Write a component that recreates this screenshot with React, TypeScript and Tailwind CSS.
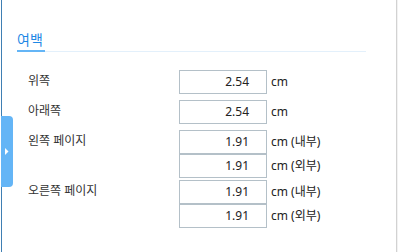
import React from "react";

const font = "font-['Noto_Sans','Noto_Sans_CJK_KR',sans-serif]";

function Box({ v }: { v: string }) {
  return (
    <div className="w-[88px] h-[24px] border border-[#b4c0c8] bg-white flex items-center justify-end pr-[17px] text-[12px] leading-[22px] text-[#222]">
      {v}
    </div>
  );
}

function Row({ label, vals, units, mt }: { label: string; vals: string[]; units: string[]; mt: string }) {
  return (
    <div className={`flex ${mt}`}>
      <div className="w-[162px] pl-[11px] h-[24px] leading-[22px] text-[12px] text-[#333]">{label}</div>
      <div className="flex flex-col">
        {vals.map((v, i) => (
          <div key={i} className="flex items-center">
            <Box v={v} />
            <span className="ml-[4px] text-[12px] leading-[24px] text-[#222]">{units[i]}</span>
          </div>
        ))}
      </div>
    </div>
  );
}

export default function App() {
  return (
    <div className={`relative w-[398px] h-[252px] bg-white flex overflow-hidden ${font}`}>
      <div className="w-px bg-white" />
      <div className="w-px bg-[#3f7fb3]" />
      <div className="flex-1 pt-[30px]">
        <div className="ml-[15px] w-[349px] flex border-b border-[#e3f0fb]">
          <div className="w-[28px] h-[22px] -mb-px border-b-2 border-[#64b5f6] text-[14px] leading-[20px] text-[#1e88e5] whitespace-nowrap">
            여백
          </div>
        </div>
        <div className="ml-[15px]">
          <Row mt="mt-[18px]" label="위쪽" vals={["2.54"]} units={["cm"]} />
          <Row mt="mt-[6px]" label="아래쪽" vals={["2.54"]} units={["cm"]} />
          <Row mt="mt-[6px]" label="왼쪽 페이지" vals={["1.91", "1.91"]} units={["cm (내부)", "cm (외부)"]} />
          <Row mt="mt-[2px]" label="오른쪽 페이지" vals={["1.91", "1.91"]} units={["cm (내부)", "cm (외부)"]} />
        </div>
      </div>
      <div className="w-px bg-[#d2d2d2]" />
      <div className="w-px bg-[#f2f2f2]" />
      <div className="absolute left-[1px] top-[116px] w-[12px] h-[71px] bg-[#64b5f6] rounded-r-[4px] flex items-center pl-[4px]">
        <svg width="4" height="7" viewBox="0 0 4 7">
          <path d="M0 0 L3.5 3.5 L0 7 Z" fill="#fff" />
        </svg>
      </div>
    </div>
  );
}
